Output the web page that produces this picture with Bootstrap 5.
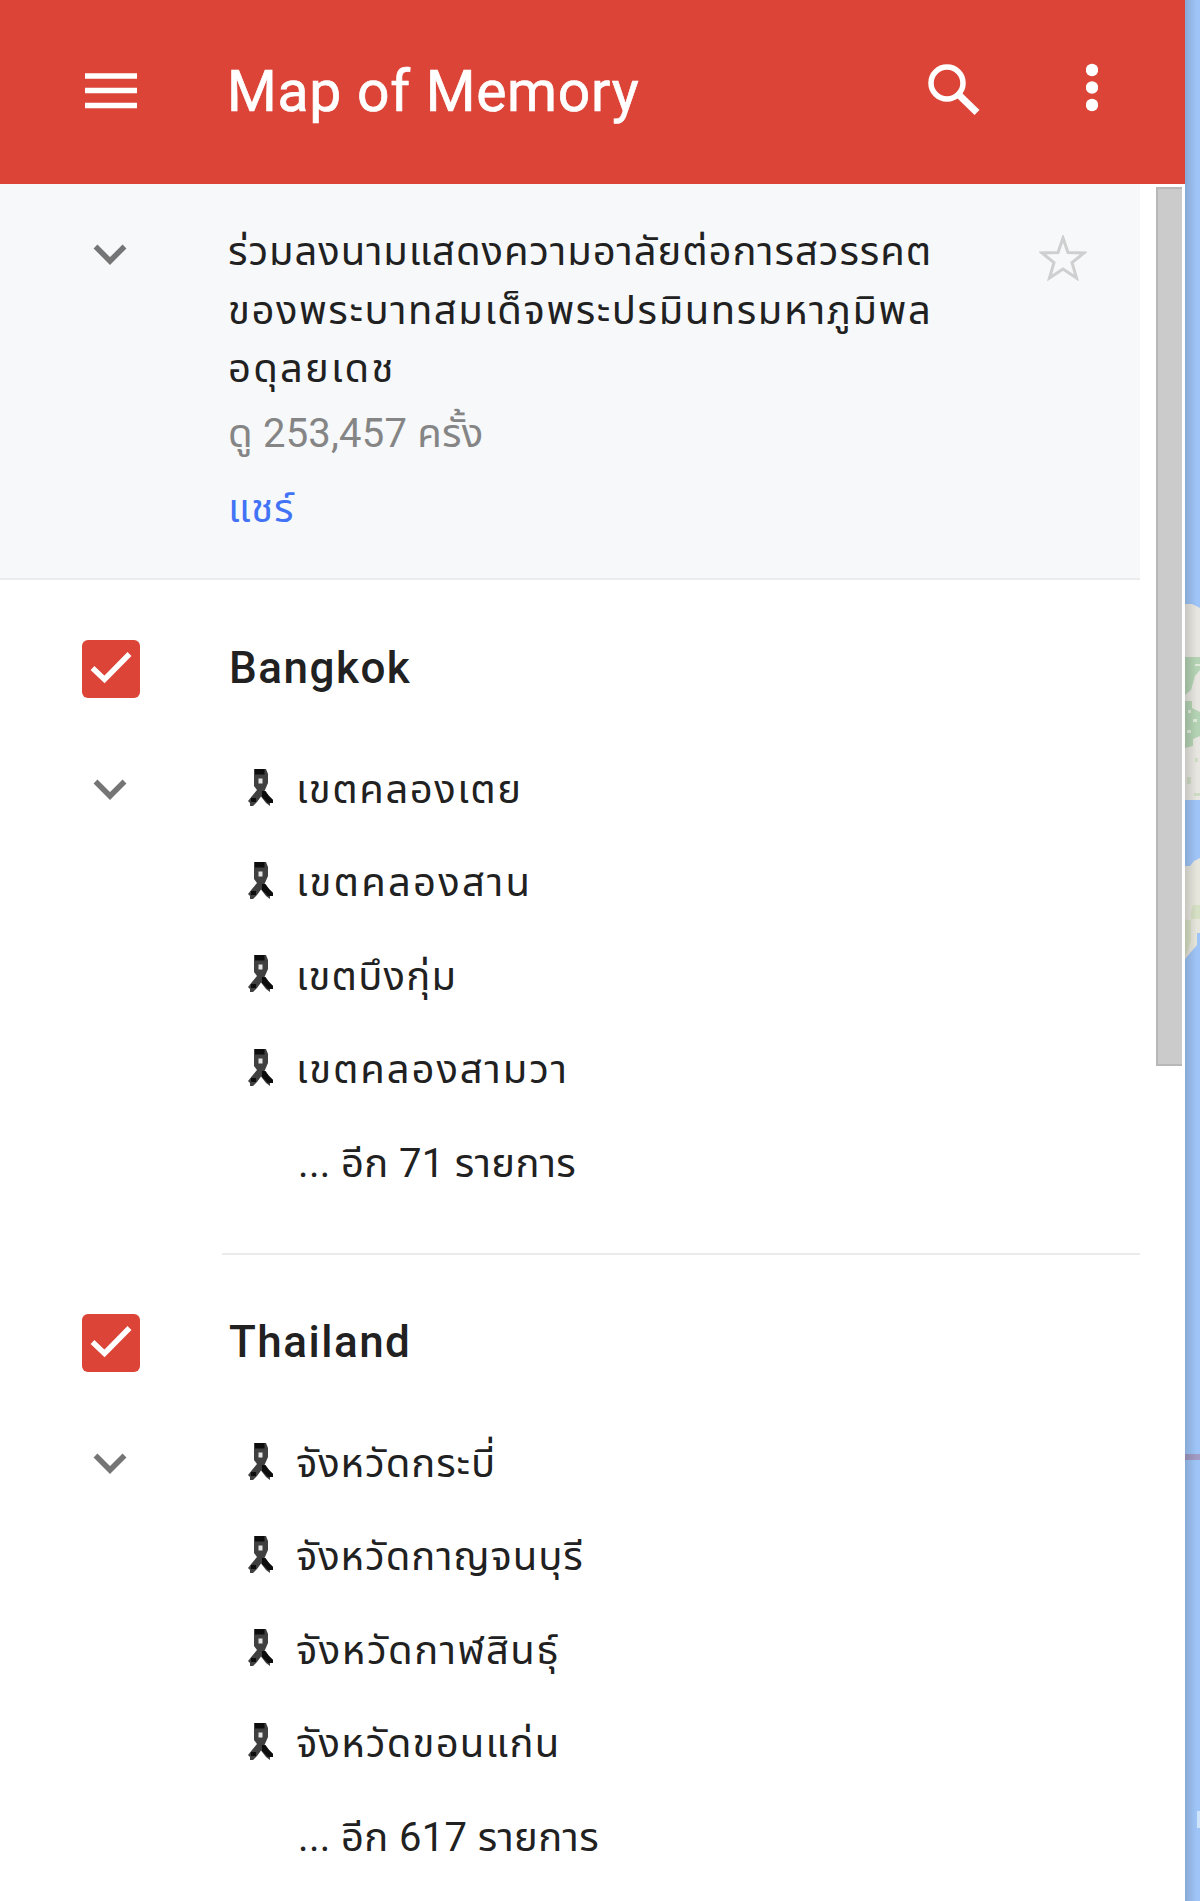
<!DOCTYPE html>
<html lang="th">
<head>
<meta charset="utf-8">
<meta name="viewport" content="width=device-width, initial-scale=1">
<title>Map of Memory</title>
<link rel="stylesheet" href="https://cdn.jsdelivr.net/npm/bootstrap@5.3.0/dist/css/bootstrap.min.css">
<style>
  body { font-family: Roboto, "Noto Sans Thai", "Noto Sans", sans-serif; color: #212121; background: #fff; }
  svg { display: block; flex-shrink: 0; }
  .app { height: 1901px; }
  .panel { width: 1185px; }
  .topbar { height: 184px; background: #db4437; padding: 0 87px 2px 85px; }
  .app-title { font-size: 57px; line-height: 1; font-weight: 400; letter-spacing: .75px; margin: 0 0 0 90px; -webkit-text-stroke: .7px #fff; }
  .bar-icon { margin-bottom: 5px; }
  .bar-icon.dots { margin-left: 106px; margin-bottom: 8px; }
  .scroller { width: 1140px; }
  .gutter { width: 228px; padding-left: 82px; flex-shrink: 0; }
  .gutter .chevron { margin-left: 11px; }
  .info { height: 396px; background: #f6f8fa; border-bottom: 2px solid #ebeced; padding-top: 39px; }
  .info .chevron { margin-top: 21px; }
  .fav { margin: 12px 53px 0 auto; }
  .desc, .views, .share { font-size: 40px; white-space: nowrap; }
  .desc { line-height: 58.7px; }
  .views { line-height: 60px; margin-top: 5px; color: #858585; letter-spacing: .2px; }
  .share { line-height: 60px; margin-top: 15px; color: #4272f5; text-decoration: none; letter-spacing: .9px; }
  .layer-block { height: 674px; padding-top: 60px; }
  .layer-head { height: 58px; }
  .layer-head h2 { font-size: 44px; line-height: 56px; font-weight: 500; letter-spacing: 1.5px; margin: 0; padding-left: 1px; }
  .tick { width: 58px; height: 58px; border-radius: 6px; background: #db4437; }
  .entries { margin-top: 45px; height: 512px; }
  .entries .chevron { margin-top: 36px; }
  .entry-list { border-bottom: 2px solid #ebebeb; margin-left: -6px; padding-left: 7px; }
  .entry { height: 93.4px; font-size: 40px; line-height: 93.4px; padding-left: 19px; white-space: nowrap; }
  .entry svg { margin: -4px 22px 0 0; }
  .entry.more { padding-left: 69px; }
  .ls-03 { letter-spacing: .35px; }
  .ls-09 { letter-spacing: .93px; }
  .ls-12 { letter-spacing: 1.2px; }
  .ls-15 { letter-spacing: 1.55px; }
  .ls-18 { letter-spacing: 1.9px; }
  .ls-21 { letter-spacing: 2.2px; }
  .track { width: 45px; padding: 3px 3px 0 16px; }
  .thumb { height: 879px; background: #cbcbcb; border: 2px solid #b8b8b8; border-right: 0; }
  .map { width: 15px; background: #9fc5f8; }
</style>
</head>
<body>
<svg class="d-none">
  <symbol id="ribbon" viewBox="0 0 26 38"><path d="M6 0H18L20 5V14L16.500 22 21 27 25 31V34H22V37L18 34 13 27.500 9 33 5 37H2V34L0 32 4 27 9 21 6 17Z" fill="#404040"/><path d="M7 0H16.500V5.500H7ZM14 22H17.500L21 27 25 31V34H20L14 28ZM3 29H8V33H3Z" fill="#0d0d0d"/><path d="M10.500 9.500H14.500V14.500H10.500Z" fill="#e4e4e4"/></symbol>
  <symbol id="chev" viewBox="0 0 34 22"><path d="M2.500 2.500 17 17 31.500 2.500" fill="none" stroke="#757575" stroke-width="5.500"/></symbol>
  <symbol id="check" viewBox="0 0 58 58"><path d="M10.500 28 22.500 39.500 47.500 14" fill="none" stroke="#fff" stroke-width="5.500"/></symbol>
</svg>
<div class="app d-flex overflow-hidden">
  <div class="panel flex-shrink-0">
    <header class="topbar d-flex align-items-center text-white">
      <svg width="52" height="36"><path d="M0 3H52M0 17.500H52M0 32.500H52" stroke="#fff" stroke-width="5.500"/></svg>
      <h1 class="app-title">Map of Memory</h1>
      <svg class="bar-icon ms-auto" width="52" height="52" viewBox="0 0 52 52"><circle cx="19" cy="20" r="16" fill="none" stroke="#fff" stroke-width="5.500"/><path d="M31 32 49 49.500" stroke="#fff" stroke-width="7"/></svg>
      <svg class="bar-icon dots" width="12" height="50" viewBox="0 0 12 50"><g fill="#fff"><circle cx="6" cy="8" r="6.200"/><circle cx="6" cy="25.500" r="6.200"/><circle cx="6" cy="43" r="6.200"/></g></svg>
    </header>
    <div class="d-flex">
      <main class="scroller">
        <section class="info d-flex">
          <div class="gutter"><svg class="chevron" width="34" height="22"><use href="#chev"/></svg></div>
          <div>
            <div class="desc">
              <div class="ls-09">ร่วมลงนามแสดงความอาลัยต่อการสวรรคต</div>
              <div class="ls-15">ของพระบาทสมเด็จพระปรมินทรมหาภูมิพล</div>
              <div class="ls-21">อดุลยเดช</div>
            </div>
            <div class="views">ดู 253,457 ครั้ง</div>
            <a class="share d-inline-block" href="#">แชร์</a>
          </div>
          <svg class="fav" width="48" height="46" viewBox="0 0 48 46"><path d="M24 3 29 17.500 45 18 33 27.500 37.500 43 24 34 10.500 43 15 27.500 3 18 19 17.500Z" fill="none" stroke="#cfcfcf" stroke-width="3"/></svg>
        </section>
        <section class="layer-block">
          <div class="layer-head d-flex">
            <div class="gutter"><div class="tick"><svg width="58" height="58"><use href="#check"/></svg></div></div>
            <h2>Bangkok</h2>
          </div>
          <div class="entries d-flex">
            <div class="gutter"><svg class="chevron" width="34" height="22"><use href="#chev"/></svg></div>
            <div class="entry-list flex-grow-1">
              <div class="entry d-flex align-items-center"><svg width="26" height="38"><use href="#ribbon"/></svg><span class="ls-15">เขตคลองเตย</span></div>
              <div class="entry d-flex align-items-center"><svg width="26" height="38"><use href="#ribbon"/></svg><span class="ls-21">เขตคลองสาน</span></div>
              <div class="entry d-flex align-items-center"><svg width="26" height="38"><use href="#ribbon"/></svg><span class="ls-12">เขตบึงกุ่ม</span></div>
              <div class="entry d-flex align-items-center"><svg width="26" height="38"><use href="#ribbon"/></svg><span class="ls-18">เขตคลองสามวา</span></div>
              <div class="entry more"><span class="ls-03">... อีก 71 รายการ</span></div>
            </div>
          </div>
        </section>
        <section class="layer-block">
          <div class="layer-head d-flex">
            <div class="gutter"><div class="tick"><svg width="58" height="58"><use href="#check"/></svg></div></div>
            <h2 class="ls-12">Thailand</h2>
          </div>
          <div class="entries d-flex">
            <div class="gutter"><svg class="chevron" width="34" height="22"><use href="#chev"/></svg></div>
            <div class="entry-list flex-grow-1">
              <div class="entry d-flex align-items-center"><svg width="26" height="38"><use href="#ribbon"/></svg><span class="ls-09">จังหวัดกระบี่</span></div>
              <div class="entry d-flex align-items-center"><svg width="26" height="38"><use href="#ribbon"/></svg><span class="ls-09">จังหวัดกาญจนบุรี</span></div>
              <div class="entry d-flex align-items-center"><svg width="26" height="38"><use href="#ribbon"/></svg><span class="ls-15">จังหวัดกาฬสินธุ์</span></div>
              <div class="entry d-flex align-items-center"><svg width="26" height="38"><use href="#ribbon"/></svg><span class="ls-12">จังหวัดขอนแก่น</span></div>
              <div class="entry more"><span class="ls-03">... อีก 617 รายการ</span></div>
            </div>
          </div>
        </section>
      </main>
      <div class="track"><div class="thumb"></div></div>
    </div>
  </div>
  <div class="map flex-shrink-0">
    <svg width="15" height="1901" viewBox="0 0 15 1901">
      <defs><linearGradient id="edge"><stop offset="0" stop-color="#000" stop-opacity=".14"/><stop offset="1" stop-color="#000" stop-opacity="0"/></linearGradient></defs>
      <path d="M0 604H7L15 608V800H0Z" fill="#e8e6e0"/>
      <path d="M0 657H15V670L10 676L6 690L0 695ZM0 701H7V708L15 712V736L8 739V746L0 748Z" fill="#b4d3b4"/>
      <path d="M3 710H6V713H3ZM8 719H12V722H8ZM10 664H15V666H10ZM2 730H6V733H2Z" fill="#dfeadb"/>
      <path d="M10 758H13V762H10ZM2 777H6V784H2ZM9 793H15V796H9Z" fill="#cfdcc4"/>
      <path d="M0 866H5L9 861L15 858V933H12V945L6 952L0 959Z" fill="#e6e6dd"/>
      <path d="M8 905H15V919H6V912ZM0 920H6V940L3 950L0 957Z" fill="#d6e0c4"/>
      <path d="M0 1454H15V1460H0Z" fill="#a39bc4"/>
      <path d="M12 1811H15V1828H12Z" fill="#cfe5fb"/>
      <path d="M0 0H12V1901H0Z" fill="url(#edge)"/>
    </svg>
  </div>
</div>
<script src="https://cdn.jsdelivr.net/npm/bootstrap@5.3.0/dist/js/bootstrap.bundle.min.js"></script>
</body>
</html>
